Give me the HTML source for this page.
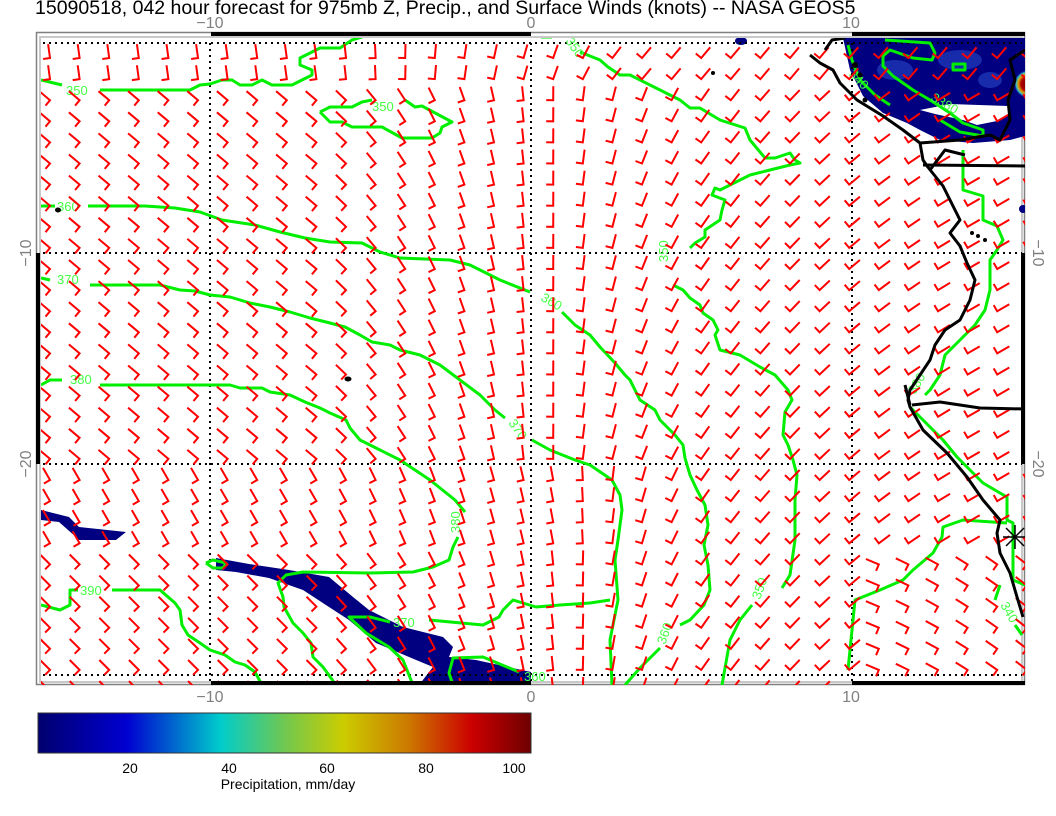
<!DOCTYPE html>
<html><head><meta charset="utf-8">
<style>
html,body{margin:0;padding:0;background:#fff;}
body{width:1056px;height:816px;overflow:hidden;position:relative;font-family:"Liberation Sans",sans-serif;}
svg{position:absolute;left:0;top:0;}
</style></head>
<body>
<svg id="s" width="1056" height="816" viewBox="0 0 1056 816" xmlns="http://www.w3.org/2000/svg" font-family="Liberation Sans, sans-serif">
<defs>
<clipPath id="fr"><rect x="41" y="38" width="984" height="647"/></clipPath>
<linearGradient id="cb" x1="0" x2="1" y1="0" y2="0">
<stop offset="0" stop-color="#00006e"/>
<stop offset="0.18" stop-color="#0000d0"/>
<stop offset="0.37" stop-color="#00cccc"/>
<stop offset="0.5" stop-color="#70c850"/>
<stop offset="0.62" stop-color="#cccc00"/>
<stop offset="0.75" stop-color="#cc7a00"/>
<stop offset="0.88" stop-color="#cc0000"/>
<stop offset="1" stop-color="#6e0000"/>
</linearGradient>
<radialGradient id="hot"><stop offset="0" stop-color="#700000"/><stop offset="0.5" stop-color="#b00000"/><stop offset="0.7" stop-color="#e0a000"/><stop offset="0.85" stop-color="#30c0d0"/><stop offset="1" stop-color="#1030b0" stop-opacity="0"/></radialGradient>
</defs>
<text x="35" y="14" font-size="19.5" fill="#000">15090518, 042 hour forecast for 975mb Z, Precip., and Surface Winds (knots) -- NASA GEOS5</text>

<rect x="36.5" y="32.5" width="988" height="652" fill="none" stroke="#808080" stroke-width="1.5"/>
<rect x="40" y="37" width="982" height="645" fill="none" stroke="#c8c8c8" stroke-width="2"/>

<g clip-path="url(#fr)">
<g fill="#000080">
<path d="M843,38 L1025,38 L1025,136 L1010,140 L973,143 L940,140 L920,130 L907,123 L883,113 L863,96 L850,70 Z"/>
<path d="M41,510 L69,517 L79,527 L126,532 L116,540 L79,540 L76,537 L59,522 L41,520 Z"/>
<path d="M216,558 L249,564 L289,570 L329,577 L353,597 L369,610 L403,627 L443,637 L453,647 L449,657 L476,660 L531,672 L531,685 L419,685 L433,667 L409,657 L376,643 L349,620 L329,607 L303,590 L269,578 L236,572 L216,570 Z"/>
<ellipse cx="741" cy="41" rx="6" ry="4"/>
<ellipse cx="1023" cy="209" rx="4" ry="4"/>
</g>
<path d="M920,110 L950,104 L1008,106 L1010,113 L997,121 L977,125 L963,120 L935,114 Z" fill="#fff"/>
<g fill="#2848c8" opacity="0.6">
<ellipse cx="895" cy="70" rx="18" ry="10"/><ellipse cx="960" cy="60" rx="22" ry="10"/><ellipse cx="990" cy="80" rx="12" ry="8"/>
</g>
<circle cx="1028" cy="84" r="14" fill="url(#hot)"/>

<g stroke="#000" stroke-width="2" stroke-dasharray="2 4" fill="none">
<line x1="43" y1="43" x2="1022" y2="43"/>
<line x1="43" y1="253" x2="1022" y2="253"/>
<line x1="43" y1="464" x2="1022" y2="464"/>
<line x1="43" y1="675" x2="1022" y2="675"/>
<line x1="210" y1="43" x2="210" y2="685"/>
<line x1="531" y1="43" x2="531" y2="685"/>
<line x1="852" y1="43" x2="852" y2="685"/>
</g>

<g stroke="#00ee00" stroke-width="3" fill="none" stroke-linejoin="round">
<polyline points="41,80 62,85"/>
<polyline points="100,90 190,90 200,85 210,84 222,80 232,80 240,85 252,85 262,80 272,85 292,85 312,75 312,70 300,65 300,58 320,48 340,48 352,40 362,37"/>
<polyline points="541,37 552,37"/>
<polyline points="580,52 600,60 608,67 620,75 630,75 650,85 680,100 690,108 700,108 720,120 745,128 750,140 765,158 775,158 790,153 795,160 800,163 790,165 770,170 750,175 740,180 720,190 715,188 712,195 725,200 722,210 720,220 705,230 705,237 695,243 690,248"/>
<polyline points="673,285 683,290 690,298 700,305 703,313 713,320 718,330 715,335 720,350 740,355 760,367 775,375 788,390 792,400 785,412 783,435 788,445 793,460 797,475 795,500 795,540 790,575 782,588"/>
<polyline points="752,605 740,620 730,640 722,685"/>
<polyline points="320,112 330,107 352,107 362,102 372,100"/>
<polyline points="405,100 415,107 422,106 452,122 442,127 440,133 432,138 402,138 382,127 352,127 342,122 330,122 320,112"/>
<polyline points="41,206 55,206"/>
<polyline points="88,206 110,206 145,206 175,208 200,212 222,220 255,225 280,232 305,238 330,242 362,243 380,252 400,258 450,260 470,265 500,280 530,292"/>
<polyline points="562,312 575,325 590,335 600,347 615,363 625,375 630,380 640,400 655,410 660,420 675,435 683,445 685,458 690,475 697,490 705,505 708,525 704,545 708,565 710,590 704,605 690,620 680,625"/>
<polyline points="660,648 640,668 625,685"/>
<polyline points="41,278 50,280"/>
<polyline points="90,285 160,285 180,290 195,291 210,295 230,297 250,303 270,307 290,312 310,318 330,323 345,327 360,335 372,342 390,345 400,350 420,355 440,365 460,380 480,395 495,410 505,418"/>
<polyline points="532,440 550,450 575,460 590,465 612,480 620,495 622,510 618,540 615,560 618,600 610,640 612,685"/>
<polyline points="41,385 50,380 62,380"/>
<polyline points="100,385 230,385 240,388 262,388 270,392 290,395 305,402 320,408 330,413 346,420 350,428 360,440 380,450 400,460 430,480 455,500 465,512"/>
<polyline points="458,537 453,547 449,560 433,567 413,572 369,573 303,572 286,575 278,583 283,597 284,607 293,623 303,633 311,643 313,657 323,667 336,685"/>
<polyline points="41,605 60,610 70,605 70,590 78,590"/>
<polyline points="112,590 160,590 175,603 180,610 182,625 188,635 200,643 210,650 225,655 235,662 245,665 255,672 262,685"/>
<polyline points="206,563 213,560 226,563 223,568 213,568 206,563"/>
<polyline points="413,685 403,660 389,647 366,633 349,617 370,617 390,622"/>
<polyline points="429,620 483,625 499,617 503,610 513,600 536,607 560,605 590,603 610,600"/>
<polyline points="453,685 449,673 453,658 483,657 519,672"/>
<polyline points="885,40 930,43 935,53 932,60 913,58 890,50 883,56 883,66 893,76 913,90 930,100 950,113 963,123 983,130 983,136 960,132 940,120"/>
<rect x="953" y="64" width="12" height="6"/>
<polyline points="848,45 852,60 860,80 875,95 890,105"/>
<polyline points="963,150 963,173 963,190 983,196 983,220 997,226 1003,240 997,250 990,260 990,290 985,310 975,325 960,340 945,355 940,375 930,390 925,395"/>
<polyline points="910,407 923,420 943,440 957,457 970,470 983,483 1000,493 1007,497 1007,520 1013,523 1013,580 1025,585"/>
<polyline points="848,670 852,630 855,600 880,590 903,580 913,570 933,553 942,537 943,527 963,520 1007,523"/>
<polyline points="1000,585 995,600"/>
<polyline points="1015,625 1022,635"/>
</g>
<g fill="#44ff44" font-size="13">
<text x="66" y="95">350</text>
<text x="372" y="111">350</text>
<text x="57" y="211">360</text>
<text x="57" y="284">370</text>
<text x="70" y="384">380</text>
<text x="80" y="595">390</text>
<text x="393" y="627">370</text>
<text x="524" y="681">360</text>
<text transform="translate(668,262) rotate(-90)">350</text>
<text transform="translate(540,300) rotate(30)">360</text>
<text transform="translate(508,423) rotate(55)">370</text>
<text transform="translate(460,533) rotate(-90)">380</text>
<text transform="translate(565,41) rotate(55)">350</text>
<text transform="translate(665,645) rotate(-70)">360</text>
<text transform="translate(760,600) rotate(-70)">350</text>
<text transform="translate(1000,605) rotate(60)">340</text>
<text transform="translate(848,75) rotate(45)">340</text>
<text transform="translate(930,100) rotate(30)">3380</text>
<text transform="translate(915,395) rotate(-60)">380</text>
</g>

<g id="barbs" stroke="#ff0000" stroke-width="2" fill="none" stroke-linecap="butt" stroke-linejoin="miter"></g>

<g stroke="#000" stroke-width="3" fill="none" stroke-linejoin="round">
<polyline points="810,55 820,63 833,70 840,83 857,100 883,116 903,130 920,143 923,160 927,166 943,186 960,220 950,233 960,246 967,263 975,280 970,300 960,320 945,330 935,345 930,360 920,375 910,390 908,400 910,407 923,430 947,453 967,477 983,500 1000,520 997,533 1000,553 1010,573 1017,597 1023,617"/>
<polyline points="825,50 832,40 845,38"/>
<polyline points="923,165 1025,166"/>
<polyline points="912,405 940,402 980,408 1025,409"/>
<polyline points="905,385 910,405"/>
<polyline points="920,143 960,140 990,135 1000,140 1010,120 1008,100 1015,80 1010,60 1025,50"/>
<polyline points="930,170 945,150 965,155"/>
</g>
<g fill="#000">
<circle cx="713" cy="73" r="2"/><ellipse cx="58" cy="210" rx="3" ry="2.5"/><ellipse cx="348" cy="379" rx="3.5" ry="2.5"/>
<circle cx="855" cy="65" r="3"/><circle cx="860" cy="75" r="2.5"/><circle cx="865" cy="100" r="2.5"/>
<circle cx="972" cy="233" r="2"/><circle cx="978" cy="236" r="2"/><circle cx="985" cy="240" r="2"/>
</g>
<g stroke="#000" stroke-width="1.5">
<line x1="1003" y1="537" x2="1027" y2="537"/><line x1="1015" y1="525" x2="1015" y2="549"/><line x1="1006" y1="528" x2="1024" y2="546"/><line x1="1006" y1="546" x2="1024" y2="528"/>
</g>
</g>

<g fill="#000">
<rect x="211" y="32" width="320" height="4"/>
<rect x="852" y="32" width="173" height="4"/>
<rect x="211" y="681" width="320" height="4"/>
<rect x="852" y="681" width="173" height="4"/>
<rect x="36" y="253" width="4" height="211"/>
<rect x="1021" y="253" width="4" height="211"/>
</g>
<g fill="#808080" font-size="16" text-anchor="middle">
<text x="210" y="28">−10</text>
<text x="531" y="28">0</text>
<text x="851" y="28">10</text>
<text x="210" y="702">−10</text>
<text x="531" y="702">0</text>
<text x="851" y="702">10</text>
<text transform="translate(31,253) rotate(-90)">−10</text>
<text transform="translate(31,464) rotate(-90)">−20</text>
<text transform="translate(1033,253) rotate(90)">−10</text>
<text transform="translate(1033,464) rotate(90)">−20</text>
</g>

<rect x="38" y="713" width="493" height="40" fill="url(#cb)" stroke="#333" stroke-width="1"/>
<g font-size="14" fill="#000" text-anchor="middle">
<text x="130" y="773">20</text>
<text x="229" y="773">40</text>
<text x="327" y="773">60</text>
<text x="426" y="773">80</text>
<text x="514" y="773">100</text>
<text x="288" y="789">Precipitation, mm/day</text>
</g>
</svg>
<script>
(function(){
var g=document.getElementById('barbs');var out='';
function ang(x,y){
  var west, mid, east;
  if(y<95){west=-8;mid=20;}
  else if(y<470){west=-50;mid=2;}
  else if(y<560){west=-30;mid=-10;}
  else {west=-45;mid=-5;}
  if(y<95) east=40; else east=35;
  var a;
  if(x<330) a=west;
  else if(x<560) a=west+(mid-west)*(x-330)/230;
  else if(y<95) a=mid+(east-mid)*Math.min(1,(x-560)/60);
  else if(x<700) a=mid+(east-mid)*(x-560)/140;
  else a=east+Math.min(25,(x-700)/10);
  if(y>560 && x>850) a=-70+(x-850)*0.1;
  return a*Math.PI/180;
}
for(var j=0;j<31;j++){
  var y=58+j*21.1;
  for(var i=0;i<34;i++){
    var x=50+i*29.6;
    var a=ang(x,y);
    var dx=Math.sin(a),dy=-Math.cos(a);
    var L=14,S=7;
    var x2=x+dx*L,y2=y+dy*L,x3=x+dy*S,y3=y-dx*S;
    out+='<polyline points="'+x2.toFixed(1)+','+y2.toFixed(1)+' '+x.toFixed(1)+','+y.toFixed(1)+' '+x3.toFixed(1)+','+y3.toFixed(1)+'"/>';
  }
}
g.innerHTML=out;
})();
</script>
</body></html>
